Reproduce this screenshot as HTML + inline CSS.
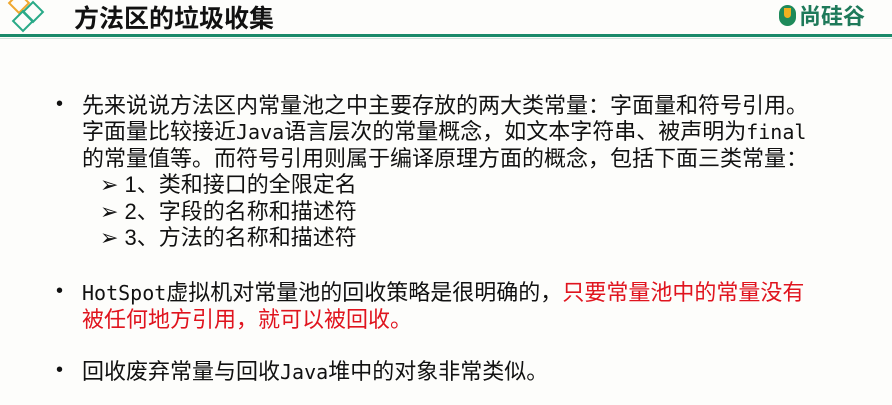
<!DOCTYPE html>
<html><head><meta charset="utf-8"><style>
body{margin:0;width:892px;height:405px;background:#fdfdfb;position:relative;overflow:hidden;font-family:"Liberation Sans","Noto Sans CJK SC",sans-serif;}
.l{position:absolute;font-size:22px;line-height:26px;color:#111;white-space:nowrap;}
.m{font-family:"DejaVu Sans Mono","Noto Sans CJK SC",monospace;font-size:20px;}
.r{color:#e0141e;}
.b{position:absolute;font-size:20px;color:#111;}
.a{font-family:"DejaVu Sans",sans-serif;font-size:22px;font-weight:bold;}
</style></head><body>
<svg style="position:absolute;left:0;top:0" width="60" height="36">
<rect x="12" y="-4" width="14" height="14" transform="rotate(45 19 3)" fill="none" stroke="#f0a830" stroke-width="2"/>
<rect x="26" y="5" width="14" height="14" transform="rotate(45 33 12)" fill="none" stroke="#2aaa88" stroke-width="2"/>
<rect x="16" y="14" width="14" height="14" transform="rotate(45 23 21)" fill="none" stroke="#2aaa88" stroke-width="2"/>
</svg>
<div style="position:absolute;left:74px;top:2px;font-size:25px;font-weight:bold;color:#111;font-family:'Noto Sans CJK SC',sans-serif;line-height:30px">方法区的垃圾收集</div>
<div style="position:absolute;left:779px;top:5px;width:17px;height:21px;border-radius:9px;background:#1e8a5a"></div>
<div style="position:absolute;left:784px;top:8px;width:7px;height:10px;border-radius:0 0 4px 4px;background:#f0b020"></div>
<div style="position:absolute;left:799px;top:1px;font-size:22px;color:#1e7a5a;font-weight:bold;font-family:'Noto Sans CJK SC',sans-serif;line-height:28px">尚硅谷</div>
<div style="position:absolute;left:0;top:34px;width:892px;height:3px;background:#1a8a6a"></div>
<div style="position:absolute;left:0;top:38px;width:892px;height:1px;background:#cfe3dc"></div>

<div class="b" style="left:56px;top:93px">•</div>
<div class="l" style="left:82px;top:93px">先来说说方法区内常量池之中主要存放的两大类常量：字面量和符号引用。</div>
<div class="l" style="left:82px;top:119px">字面量比较接近<span class="m">Java</span>语言层次的常量概念，如文本字符串、被声明为<span class="m">final</span></div>
<div class="l" style="left:82px;top:146px">的常量值等。而符号引用则属于编译原理方面的概念，包括下面三类常量：</div>
<div class="l" style="left:100px;top:172px"><span class="a">➢</span> 1、类和接口的全限定名</div>
<div class="l" style="left:100px;top:199px"><span class="a">➢</span> 2、字段的名称和描述符</div>
<div class="l" style="left:100px;top:225px"><span class="a">➢</span> 3、方法的名称和描述符</div>

<div class="b" style="left:56px;top:280px">•</div>
<div class="l" style="left:82px;top:280px"><span class="m">HotSpot</span>虚拟机对常量池的回收策略是很明确的，<span class="r">只要常量池中的常量没有</span></div>
<div class="l r" style="left:82px;top:307px">被任何地方引用，就可以被回收。</div>

<div class="b" style="left:56px;top:359px">•</div>
<div class="l" style="left:82px;top:359px">回收废弃常量与回收<span class="m">Java</span>堆中的对象非常类似。</div>
</body></html>
